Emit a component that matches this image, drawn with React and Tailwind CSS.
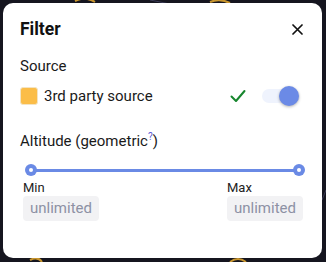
import React from "react";

export default function App() {
  return (
    <div className="relative w-[326px] h-[262px] bg-[#15151f] overflow-hidden" style={{ fontFamily: "Roboto, 'Noto Sans', sans-serif" }}>
      <svg className="absolute inset-0" width="326" height="262" viewBox="0 0 326 262">
        <path d="M75 1 Q85 -4 95 2" stroke="#c9962e" strokeWidth="2" fill="none" />
        <path d="M210 2 Q220 -2 230 3" stroke="#c9962e" strokeWidth="2" fill="none" />
        <path d="M30 260 Q38 256 42 262" stroke="#c9962e" strokeWidth="2" fill="none" />
        <path d="M230 262 Q238 256 246 262" stroke="#c9962e" strokeWidth="2" fill="none" />
        <path d="M150 0 L190 8" stroke="#3a3a55" strokeWidth="1" fill="none" />
        <path d="M322 200 L326 190" stroke="#3a3a55" strokeWidth="1" fill="none" />
      </svg>
      <div className="absolute left-[3px] top-[3px] w-[319px] h-[255px] bg-white rounded-[10px] px-[17px] pt-[16px] flex flex-col">
        <div className="flex items-center justify-between h-[20px]">
          <span className="text-[17.5px] font-bold text-[#111] leading-[20px]">Filter</span>
          <svg width="11" height="11" viewBox="0 0 11 11" className="mr-[2px]">
            <path d="M1 1 L10 10 M10 1 L1 10" stroke="#111" strokeWidth="1.7" strokeLinecap="round" />
          </svg>
        </div>
        <div className="mt-[18px] text-[15px] text-[#1a1a1a] leading-[18px]">Source</div>
        <div className="mt-[11px] flex items-center h-[20px]">
          <div className="w-[18px] h-[18px] rounded-[3px] bg-[#fbbd48] border border-[#f3e4c4]" />
          <span className="ml-[6px] text-[15px] text-[#1a1a1a] leading-[18px]">3rd party source</span>
          <svg width="16" height="14" viewBox="0 0 16 14" className="ml-auto mr-[16px]">
            <path d="M1.5 7.5 L6 12 L14.5 2" stroke="#17862e" strokeWidth="2" fill="none" strokeLinecap="round" strokeLinejoin="round" />
          </svg>
          <div className="relative w-[38px] h-[14px] rounded-full bg-[#eff3fd] mr-[5px]">
            <div className="absolute right-[1px] top-[-3px] w-[20px] h-[20px] rounded-full bg-[#6b8ae6] shadow-[0_1px_3px_rgba(0,0,0,0.3)]" />
          </div>
        </div>
        <div className="mt-[26px] text-[15px] text-[#1a1a1a] leading-[18px]">
          Altitude (geometric<span className="relative top-[-6px] text-[10px] text-[#5b5bd6]">?</span>)
        </div>
        <div className="mt-[12px] ml-[5px] relative h-[12px] flex items-center">
          <div className="absolute left-[6px] right-[6px] h-[3px] bg-[#6a8ae5]" />
          <div className="absolute left-0 w-[12px] h-[12px] rounded-full bg-[#6a8ae5] flex items-center justify-center">
            <div className="w-[4px] h-[4px] rounded-full bg-white" />
          </div>
          <div className="absolute right-0 w-[12px] h-[12px] rounded-full bg-[#6a8ae5] flex items-center justify-center">
            <div className="w-[4px] h-[4px] rounded-full bg-white" />
          </div>
        </div>
        <div className="mt-[4px] flex justify-between ml-[3px] mr-[2px]">
          <div className="flex flex-col">
            <span className="text-[13px] text-[#222] leading-[16px]">Min</span>
            <div className="w-[76px] h-[25px] rounded-[4px] bg-[#f2f2f4] px-[7px] flex items-center text-[15px] text-[#8d91a4]">unlimited</div>
          </div>
          <div className="flex flex-col">
            <span className="text-[13px] text-[#222] leading-[16px]">Max</span>
            <div className="w-[76px] h-[25px] rounded-[4px] bg-[#f2f2f4] px-[7px] flex items-center text-[15px] text-[#8d91a4]">unlimited</div>
          </div>
        </div>
      </div>
    </div>
  );
}
